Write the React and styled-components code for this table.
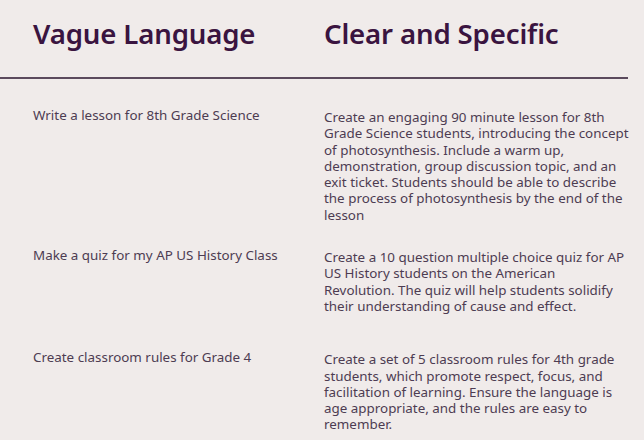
import React from "react";
import styled, { createGlobalStyle } from "styled-components";

const Global = createGlobalStyle`
  html, body { margin: 0; padding: 0; background: #f0ebea; }
  body { font-family: "Noto Sans", "Open Sans", sans-serif; }
`;

const Page = styled.div`
  width: 644px;
  height: 440px;
  overflow: hidden;
  background: #f0ebea;
`;

const Header = styled.div`
  display: grid;
  grid-template-columns: 291px 1fr;
  padding: 14px 0 0 33px;
  height: 79px;
  box-sizing: border-box;
  width: 628px;
  border-bottom: 2px solid #5b4a5d;
`;

const Heading = styled.h2`
  margin: 0;
  font-family: "Noto Sans", sans-serif;
  font-weight: 600;
  font-size: 27.6px;
  line-height: 38px;
  color: #3a1440;
  letter-spacing: -0.15px;
`;

const Rows = styled.div`
  display: flex;
  flex-direction: column;
  padding: 30px 0 0 33px;
`;

const Row = styled.div`
  display: grid;
  grid-template-columns: 291px 312px;
  margin-top: ${(p) => p.$gap || 0}px;
`;

const Vague = styled.p`
  margin: -2px 0 0;
  font-size: 13.4px;
  line-height: 16.3px;
  color: #4d3c52;
`;

const Clear = styled.p`
  margin: 0;
  font-size: 13.4px;
  line-height: 16.3px;
  color: #4d3c52;
  white-space: pre-line;
`;

const data = [
  {
    v: "Write a lesson for 8th Grade Science",
    c: "Create an engaging 90 minute lesson for 8th\nGrade Science students, introducing the concept\nof photosynthesis. Include a warm up,\ndemonstration, group discussion topic, and an\nexit ticket. Students should be able to describe\nthe process of photosynthesis by the end of the\nlesson",
    gap: 0,
  },
  {
    v: "Make a quiz for my AP US History Class",
    c: "Create a 10 question multiple choice quiz for AP\nUS History students on the American\nRevolution. The quiz will help students solidify\ntheir understanding of cause and effect.",
    gap: 26,
  },
  {
    v: "Create classroom rules for Grade 4",
    c: "Create a set of 5 classroom rules for 4th grade\nstudents, which promote respect, focus, and\nfacilitation of learning. Ensure the language is\nage appropriate, and the rules are easy to\nremember.",
    gap: 37,
  },
];

export default function App() {
  return (
    <Page>
      <Global />
      <Header>
        <Heading>Vague Language</Heading>
        <Heading>Clear and Specific</Heading>
      </Header>
      <Rows>
        {data.map((d) => (
          <Row key={d.v} $gap={d.gap}>
            <Vague>{d.v}</Vague>
            <Clear>{d.c}</Clear>
          </Row>
        ))}
      </Rows>
    </Page>
  );
}
